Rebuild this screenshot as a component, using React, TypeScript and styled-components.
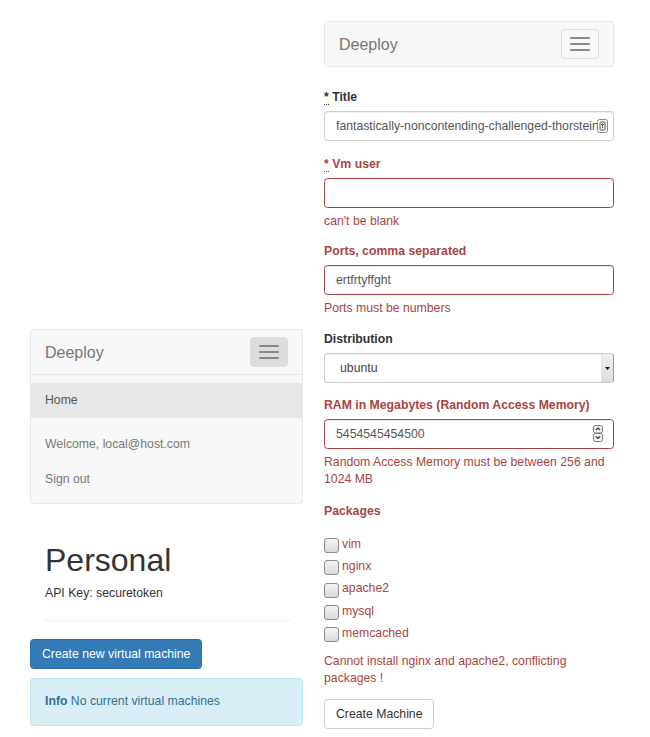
import styled, { createGlobalStyle } from 'styled-components'

const GlobalStyle = createGlobalStyle`
  html, body {
    margin: 0;
    padding: 0;
    background: #fff;
  }
  body {
    font-family: "Liberation Sans", Arial, Helvetica, sans-serif;
    font-size: 12.25px;
    line-height: 17px;
    color: #333;
  }
  * {
    box-sizing: border-box;
  }
`

const ERROR = '#a94442'

const Page = styled.div`
  display: flex;
  align-items: flex-start;
  gap: 21px;
  padding: 21px 0 0 30px;
`

const LeftColumn = styled.div`
  width: 273px;
  margin-top: 308px;
`

const RightColumn = styled.div`
  width: 290px;
`

const Navbar = styled.nav<{ $gap?: number }>`
  background: #f8f8f8;
  border: 1px solid #e7e7e7;
  border-radius: 4px;
  margin-bottom: ${({ $gap }) => $gap ?? 0}px;
`

const NavHeader = styled.div`
  height: 44px;
  display: flex;
  align-items: center;
  justify-content: space-between;
  padding: 0 14px;
`

const Brand = styled.a`
  font-size: 16px;
  line-height: 20px;
  padding-top: 1px;
  color: #777;
  text-decoration: none;
`

const Toggle = styled.button<{ $active?: boolean }>`
  width: 38px;
  height: 30px;
  padding: 0;
  border: 1px solid #ddd;
  border-radius: 4px;
  background: ${({ $active }) => ($active ? '#ddd' : 'transparent')};
  display: flex;
  flex-direction: column;
  align-items: center;
  justify-content: center;
  gap: 4px;
  cursor: pointer;
`

const IconBar = styled.span`
  display: block;
  width: 20px;
  height: 2px;
  border-radius: 1px;
  background: #888;
`

const Collapse = styled.div`
  border-top: 1px solid #e7e7e7;
`

const NavList = styled.ul<{ $top?: number; $bottom?: number }>`
  list-style: none;
  margin: ${({ $top }) => $top ?? 7.5}px 0 ${({ $bottom }) => $bottom ?? 7.5}px;
  padding: 0;
`

const NavItem = styled.li<{ $active?: boolean }>`
  height: 35px;
  display: flex;
  align-items: center;
  padding: 0 14px;
  color: ${({ $active }) => ($active ? '#555' : '#777')};
  background: ${({ $active }) => ($active ? '#e7e7e7' : 'transparent')};
`

const PageHeader = styled.div`
  padding: 0 13px 0 15px;
`

const Heading = styled.h1`
  margin: 39px 0 7px;
  font-size: 32px;
  line-height: 35px;
  font-weight: 500;
  color: #333;
`

const ApiKey = styled.p`
  margin: 0;
`

const Rule = styled.hr`
  margin: 18px 0;
  border: 0;
  border-top: 1px solid #eee;
`

const Button = styled.button<{ $primary?: boolean }>`
  display: inline-flex;
  align-items: center;
  height: 30px;
  padding: 0 11px;
  font-family: inherit;
  font-size: 12.25px;
  border-radius: 3.5px;
  border: 1px solid ${({ $primary }) => ($primary ? '#2e6da4' : '#ccc')};
  background: ${({ $primary }) => ($primary ? '#337ab7' : '#fff')};
  color: ${({ $primary }) => ($primary ? '#fff' : '#333')};
  cursor: pointer;
`

const Alert = styled.div`
  margin-top: 9px;
  padding: 14.5px 14px;
  border: 1px solid #bce8f1;
  border-radius: 4px;
  background: #d9edf7;
  color: #31708f;
`

const FormGroup = styled.div<{ $mb?: number }>`
  margin-bottom: ${({ $mb }) => $mb ?? 15}px;
`

const Label = styled.label<{ $error?: boolean }>`
  display: block;
  margin-bottom: 5px;
  font-weight: bold;
  color: ${({ $error }) => ($error ? ERROR : '#333')};
`

const Required = styled.abbr`
  text-decoration: none;
  border-bottom: 1px dotted currentColor;
  cursor: help;
`

const InputWrap = styled.div`
  position: relative;
`

const TextInput = styled.input<{ $error?: boolean }>`
  display: block;
  width: 100%;
  height: 30px;
  padding: 0 11px;
  font-family: inherit;
  font-size: 12.25px;
  color: #555;
  background: #fff;
  border: 1px solid ${({ $error }) => ($error ? ERROR : '#ccc')};
  border-radius: 3.5px;
  box-shadow: inset 0 1px 1px rgba(0, 0, 0, 0.075);
  outline: none;
`

const FieldIcon = styled.span`
  position: absolute;
  display: flex;
  top: 8px;
  right: 6px;
`

const Spinner = styled.span`
  position: absolute;
  display: flex;
  top: 6px;
  right: 11px;
`

const SelectBox = styled.div`
  display: flex;
  height: 30px;
  border: 1px solid #ccc;
  border-right-color: #999;
  border-radius: 3.5px;
  box-shadow: inset 0 1px 1px rgba(0, 0, 0, 0.075);
  background: #fff;
  overflow: hidden;
`

const SelectValue = styled.span`
  flex: 1;
  display: flex;
  align-items: center;
  padding-left: 15px;
  color: #444;
`

const SelectArrow = styled.span`
  width: 12px;
  display: flex;
  align-items: center;
  justify-content: center;
  background: linear-gradient(#f0f0f0, #dcdcdc);
  border-left: 1px solid #e2e2e2;
`

const HelpBlock = styled.p<{ $mt?: number }>`
  margin: ${({ $mt }) => $mt ?? 5}px 0 0;
  color: ${ERROR};
`

const CheckList = styled.div`
  margin-top: 13px;
`

const CheckRow = styled.label`
  display: flex;
  align-items: center;
  height: 22.3px;
  color: ${ERROR};
  cursor: pointer;
`

const CheckBox = styled.input.attrs({ type: 'checkbox' })`
  appearance: none;
  flex: none;
  width: 15px;
  height: 15px;
  margin: 3px 3px 0 0;
  border: 1px solid #8c8c8c;
  border-radius: 3px;
  background: linear-gradient(#f4f4f4, #dadada);
`

const packages = ['vim', 'nginx', 'apache2', 'mysql', 'memcached']

function NavToggle({ active }: { active?: boolean }) {
  return (
    <Toggle $active={active} aria-label="Toggle navigation">
      <IconBar />
      <IconBar />
      <IconBar />
    </Toggle>
  )
}

export default function App() {
  return (
    <>
      <GlobalStyle />
      <Page>
        <LeftColumn>
          <Navbar>
            <NavHeader>
              <Brand href="#">Deeploy</Brand>
              <NavToggle active />
            </NavHeader>
            <Collapse>
              <NavList>
                <NavItem $active>Home</NavItem>
              </NavList>
              <NavList $top={9.5} $bottom={5.5}>
                <NavItem>Welcome, local@host.com</NavItem>
                <NavItem>Sign out</NavItem>
              </NavList>
            </Collapse>
          </Navbar>
          <PageHeader>
            <Heading>Personal</Heading>
            <ApiKey>API Key: securetoken</ApiKey>
            <Rule />
          </PageHeader>
          <Button $primary>Create new virtual machine</Button>
          <Alert>
            <strong>Info</strong> No current virtual machines
          </Alert>
        </LeftColumn>

        <RightColumn>
          <Navbar $gap={22}>
            <NavHeader>
              <Brand href="#">Deeploy</Brand>
              <NavToggle />
            </NavHeader>
          </Navbar>

          <form onSubmit={e => e.preventDefault()}>
            <FormGroup>
              <Label>
                <Required title="required">*</Required> Title
              </Label>
              <InputWrap>
                <TextInput defaultValue="fantastically-noncontending-challenged-thorstein" />
                <FieldIcon>
                  <svg width="11" height="14" viewBox="0 0 11 14">
                    <rect x="0.5" y="0.5" width="10" height="13" rx="2" fill="#fff" stroke="#888" />
                    <rect x="3" y="3" width="5" height="8" rx="0.5" fill="none" stroke="#555" />
                    <path d="M5.5 4.5 V9.5 M4 6 L5.5 4.5 L7 6" fill="none" stroke="#555" strokeWidth="0.9" />
                  </svg>
                </FieldIcon>
              </InputWrap>
            </FormGroup>

            <FormGroup $mb={13}>
              <Label $error>
                <Required title="required">*</Required> Vm user
              </Label>
              <TextInput $error />
              <HelpBlock>can't be blank</HelpBlock>
            </FormGroup>

            <FormGroup $mb={14}>
              <Label $error>Ports, comma separated</Label>
              <TextInput $error defaultValue="ertfrtyffght" />
              <HelpBlock>Ports must be numbers</HelpBlock>
            </FormGroup>

            <FormGroup $mb={14}>
              <Label>Distribution</Label>
              <SelectBox>
                <SelectValue>ubuntu</SelectValue>
                <SelectArrow>
                  <svg width="5" height="3" viewBox="0 0 5 3">
                    <path d="M0 0 H5 L2.5 3 Z" fill="#111" />
                  </svg>
                </SelectArrow>
              </SelectBox>
            </FormGroup>

            <FormGroup $mb={15}>
              <Label $error>RAM in Megabytes (Random Access Memory)</Label>
              <InputWrap>
                <TextInput $error inputMode="numeric" defaultValue="5454545454500" />
                <Spinner>
                  <svg width="10" height="17" viewBox="0 0 10 17">
                    <rect x="0.5" y="0.5" width="9" height="7.5" rx="2" fill="#f6f6f6" stroke="#777" />
                    <rect x="0.5" y="8.5" width="9" height="8" rx="2" fill="#f6f6f6" stroke="#777" />
                    <path d="M2.8 5.2 L5 3 L7.2 5.2" fill="none" stroke="#222" strokeWidth="1.1" />
                    <path d="M2.8 11.3 L5 13.5 L7.2 11.3" fill="none" stroke="#222" strokeWidth="1.1" />
                  </svg>
                </Spinner>
              </InputWrap>
              <HelpBlock>Random Access Memory must be between 256 and 1024 MB</HelpBlock>
            </FormGroup>

            <FormGroup $mb={12}>
              <Label $error>Packages</Label>
              <CheckList>
                {packages.map(name => (
                  <CheckRow key={name}>
                    <CheckBox />
                    {name}
                  </CheckRow>
                ))}
              </CheckList>
              <HelpBlock $mt={9}>Cannot install nginx and apache2, conflicting packages !</HelpBlock>
            </FormGroup>

            <Button type="submit">Create Machine</Button>
          </form>
        </RightColumn>
      </Page>
    </>
  )
}
